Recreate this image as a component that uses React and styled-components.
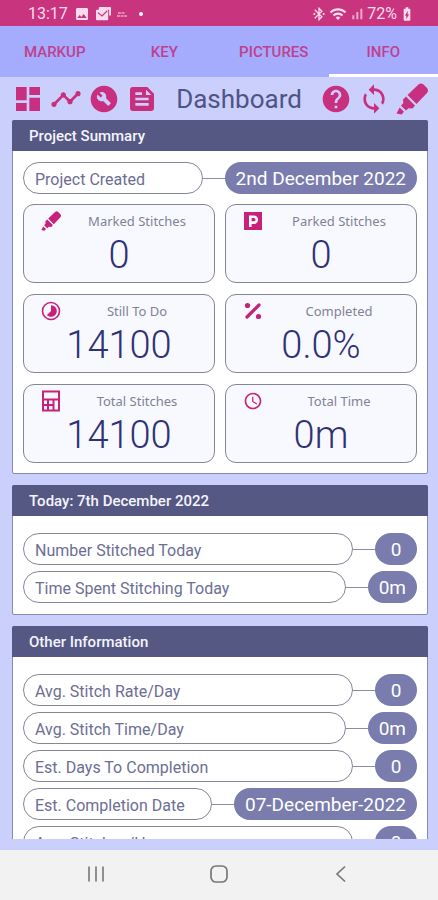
import React, { useState } from "react";
import styled, { createGlobalStyle } from "styled-components";
import {
  MdBatteryChargingFull,
  MdBluetoothConnected,
  MdBuildCircle,
  MdDashboard,
  MdFeed,
  MdHelp,
  MdImage,
  MdLoop,
  MdSchedule,
  MdSignalCellularAlt,
  MdTimeline,
  MdWifi,
} from "react-icons/md";

const GlobalStyle = createGlobalStyle`
  * {
    box-sizing: border-box;
  }
  body {
    margin: 0;
    font-family: Roboto, "Noto Sans", sans-serif;
    background: #cbcffb;
  }
  button {
    font-family: inherit;
    border: none;
    background: none;
    padding: 0;
    cursor: pointer;
  }
`;

const HighlighterIcon = () => (
  <svg viewBox="0 0 32 32" fill="currentColor" aria-hidden="true">
    <path d="M11.500 12 22.500 1.500Q25-.5 27.500 1.500L31 5Q33 7.500 31 10L20.500 21Z" />
    <path d="M10 13.500 19 22.500 16.500 25.500 12.500 25.200 10 27.500 5 22.800 7.300 20 7 16.500Z" />
    <path d="M3.600 24.600 8 28.800 5.500 31.500.5 30.500Z" />
  </svg>
);

const ProgressIcon = () => (
  <svg viewBox="0 0 20 20" fill="none" stroke="currentColor" aria-hidden="true">
    <circle cx="10" cy="10" r="8.500" strokeWidth="1.600" />
    <path d="M10 4.200A5.800 5.800 0 1 1 5.900 14.100L10 10Z" fill="currentColor" stroke="none" />
  </svg>
);

const ParkedIcon = () => (
  <svg viewBox="0 0 20 20" aria-hidden="true">
    <path fill="currentColor" d="M1 1h18v18H1Z" />
    <path fill="none" stroke="#fff" strokeWidth="2.600" d="M7.300 16V5.800h3.600a2.900 2.900 0 0 1 0 5.800H7.300" />
  </svg>
);

const PercentIcon = () => (
  <svg viewBox="0 0 20 20" fill="currentColor" aria-hidden="true">
    <circle cx="4.500" cy="4.500" r="2.600" />
    <circle cx="15.500" cy="15.500" r="2.600" />
    <path d="M4 16 16 4" stroke="currentColor" strokeWidth="3.200" strokeLinecap="round" />
  </svg>
);

const CalculatorIcon = () => (
  <svg viewBox="0 0 20 22" fill="none" stroke="currentColor" strokeWidth="2" aria-hidden="true">
    <rect x="2" y="1.500" width="16" height="19" />
    <path d="M2 9.500h16M2 15h10.500M7 9.500v11M12.500 9.500v11" />
  </svg>
);

const MailIcon = () => (
  <svg viewBox="0 0 16 14" aria-hidden="true">
    <path fill="currentColor" d="M4 0h11q1 0 1 1v8h-2V3H3V1q0-1 1-1ZM1 3h11q1 0 1 1v9q0 1-1 1H1q-1 0-1-1V4q0-1 1-1Z" />
    <path fill="none" stroke="#c9347f" strokeWidth="1.300" d="m2 6 4.500 3.500L12 4" />
  </svg>
);

const DotsIcon = () => (
  <svg viewBox="0 0 10 5" stroke="currentColor" aria-hidden="true">
    <path d="M1 1h7M0 4h10" strokeDasharray="3 .6" />
  </svg>
);

const RecentsIcon = () => (
  <svg viewBox="0 0 18 18" fill="none" stroke="currentColor" strokeWidth="1.600" aria-hidden="true">
    <path d="M2 1.500v15M9 1.500v15M16 1.500v15" />
  </svg>
);

const HomeIcon = () => (
  <svg viewBox="0 0 18 18" fill="none" stroke="currentColor" strokeWidth="1.700" aria-hidden="true">
    <rect x="1" y="1" width="16" height="16" rx="5" />
  </svg>
);

const BackIcon = () => (
  <svg viewBox="0 0 18 18" fill="none" stroke="currentColor" strokeWidth="1.700" aria-hidden="true">
    <path d="M13 1.500 5 9l8 7.500" />
  </svg>
);

const tabs = ["Markup", "Key", "Pictures", "Info"];

const tiles = [
  { label: "Marked Stitches", value: "0", icon: <HighlighterIcon /> },
  { label: "Parked Stitches", value: "0", icon: <ParkedIcon /> },
  { label: "Still To Do", value: "14100", icon: <ProgressIcon /> },
  { label: "Completed", value: "0.0%", icon: <PercentIcon /> },
  { label: "Total Stitches", value: "14100", icon: <CalculatorIcon /> },
  { label: "Total Time", value: "0m", icon: <MdSchedule /> },
];

const today = [
  { label: "Number Stitched Today", value: "0" },
  { label: "Time Spent Stitching Today", value: "0m" },
];

const other = [
  { label: "Avg. Stitch Rate/Day", value: "0" },
  { label: "Avg. Stitch Time/Day", value: "0m" },
  { label: "Est. Days To Completion", value: "0" },
  { label: "Est. Completion Date", value: "07-December-2022" },
  { label: "Avg. Stitches/Hour", value: "0" },
];

const StatRow = ({ label, value }) => (
  <Row>
    <RowLabel>{label}</RowLabel>
    <Connector />
    <RowValue>{value}</RowValue>
  </Row>
);

const App = () => {
  const [active, setActive] = useState("Info");

  return (
    <Screen>
      <GlobalStyle />
      <StatusBar>
        <StatusGroup>
          <Clock>13:17</Clock>
          <StatusIcon $size={16}>
            <MdImage />
          </StatusIcon>
          <StatusIcon $size={15}>
            <MailIcon />
          </StatusIcon>
          <StatusIcon $size={10}>
            <DotsIcon />
          </StatusIcon>
          <Dot />
        </StatusGroup>
        <StatusGroup $tight>
          <StatusIcon $size={16}>
            <MdBluetoothConnected />
          </StatusIcon>
          <StatusIcon $size={18}>
            <MdWifi />
          </StatusIcon>
          <StatusIcon $size={16} $dim>
            <MdSignalCellularAlt />
          </StatusIcon>
          <Battery>72%</Battery>
          <StatusIcon $size={16}>
            <MdBatteryChargingFull />
          </StatusIcon>
        </StatusGroup>
      </StatusBar>

      <Tabs>
        {tabs.map((tab) => (
          <Tab key={tab} type="button" $active={tab === active} onClick={() => setActive(tab)}>
            {tab}
          </Tab>
        ))}
      </Tabs>

      <Toolbar>
        <ToolGroup>
          <ToolButton type="button" aria-label="Dashboard">
            <MdDashboard />
          </ToolButton>
          <ToolButton type="button" aria-label="Timeline">
            <MdTimeline />
          </ToolButton>
          <ToolButton type="button" aria-label="Settings">
            <MdBuildCircle />
          </ToolButton>
          <ToolButton type="button" aria-label="Notes">
            <MdFeed />
          </ToolButton>
        </ToolGroup>
        <Title>Dashboard</Title>
        <ToolGroup>
          <ToolButton type="button" aria-label="Help">
            <MdHelp />
          </ToolButton>
          <ToolButton type="button" aria-label="Refresh">
            <MdLoop />
          </ToolButton>
          <ToolButton type="button" aria-label="Highlighter">
            <HighlighterIcon />
          </ToolButton>
        </ToolGroup>
      </Toolbar>

      <Content>
        <Panel>
          <PanelTitle>Project Summary</PanelTitle>
          <PanelBody $compact>
            <StatRow label="Project Created" value="2nd December 2022" />
            <TileGrid>
              {tiles.map((tile) => (
                <Tile key={tile.label}>
                  <TileIcon>{tile.icon}</TileIcon>
                  <TileLabel>{tile.label}</TileLabel>
                  <TileValue>{tile.value}</TileValue>
                </Tile>
              ))}
            </TileGrid>
          </PanelBody>
        </Panel>
        <Panel>
          <PanelTitle>Today: 7th December 2022</PanelTitle>
          <PanelBody>
            {today.map((row) => (
              <StatRow key={row.label} {...row} />
            ))}
          </PanelBody>
        </Panel>
        <Panel>
          <PanelTitle>Other Information</PanelTitle>
          <PanelBody>
            {other.map((row) => (
              <StatRow key={row.label} {...row} />
            ))}
          </PanelBody>
        </Panel>
      </Content>

      <NavBar>
        <NavButton type="button" aria-label="Recent apps">
          <RecentsIcon />
        </NavButton>
        <NavButton type="button" aria-label="Home">
          <HomeIcon />
        </NavButton>
        <NavButton type="button" aria-label="Back">
          <BackIcon />
        </NavButton>
      </NavBar>
    </Screen>
  );
};

const Screen = styled.div`
  display: flex;
  flex-direction: column;
  height: 100vh;
  overflow: hidden;
  background: #cbcffb;
`;

const StatusBar = styled.header`
  display: flex;
  flex: none;
  justify-content: space-between;
  align-items: center;
  height: 26px;
  padding: 2px 23px 0 28px;
  background: #c9347f;
  color: #fbdcec;
`;

const StatusGroup = styled.div`
  display: flex;
  align-items: center;
  gap: ${(props) => (props.$tight ? "2px" : "6px")};
`;

const Clock = styled.time`
  font-size: 16px;
  line-height: 20px;
`;

const Battery = styled.span`
  font-size: 16px;
  line-height: 20px;
`;

const StatusIcon = styled.span`
  display: flex;
  width: ${(props) => props.$size}px;
  opacity: ${(props) => (props.$dim ? 0.7 : 1)};
  svg {
    width: 100%;
    height: auto;
  }
`;

const Dot = styled.span`
  width: 4px;
  height: 4px;
  margin-left: 6px;
  border-radius: 50%;
  background: #fff;
`;

const Tabs = styled.nav`
  display: grid;
  flex: none;
  grid-template-columns: repeat(4, 1fr);
  height: 51px;
  background: #a5abfd;
`;

const Tab = styled.button`
  border-top: 3px solid transparent;
  border-bottom: 3px solid ${(props) => (props.$active ? "#fff" : "transparent")};
  color: #c0408f;
  font-size: 15px;
  font-weight: 500;
  text-transform: uppercase;
`;

const Toolbar = styled.div`
  display: flex;
  flex: none;
  justify-content: space-between;
  align-items: center;
  height: 43px;
  padding: 0 10px 0 12px;
`;

const ToolGroup = styled.div`
  display: flex;
  gap: 6px;
`;

const ToolButton = styled.button`
  display: flex;
  color: #c8307f;
  svg {
    width: 32px;
    height: 32px;
  }
`;

const Title = styled.h1`
  margin: 0;
  color: #4f5485;
  font-size: 26px;
  font-weight: 400;
  line-height: 36px;
`;

const Content = styled.main`
  flex: 1;
  min-height: 0;
  margin-bottom: 11px;
  padding: 0 10px 0 12px;
  overflow: hidden;
`;

const Panel = styled.section`
  margin-bottom: 11px;
  border: 1px solid #8589b5;
  border-radius: 2px;
  background: #fff;
`;

const PanelTitle = styled.h2`
  margin: -1px -1px 0;
  padding: 1px 17px 0;
  border-radius: 2px 2px 0 0;
  background: #545882;
  color: #f4f4ff;
  font-size: 15px;
  font-weight: 500;
  line-height: 30px;
`;

const PanelBody = styled.div`
  display: flex;
  flex-direction: column;
  gap: ${(props) => (props.$compact ? "10px" : "6px")};
  padding: ${(props) => (props.$compact ? "11px 10px 10px" : "17px 10px 11px")};
`;

const Row = styled.div`
  display: flex;
  align-items: center;
`;

const RowLabel = styled.span`
  flex: 1;
  height: 32px;
  padding: 1px 11px 0;
  border: 1px solid #85859a;
  border-radius: 16px;
  color: #6c6e93;
  font-size: 16px;
  line-height: 32px;
  white-space: nowrap;
`;

const Connector = styled.span`
  width: 22px;
  height: 1px;
  background: #8c8ca8;
`;

const RowValue = styled.span`
  min-width: 42px;
  height: 32px;
  padding: 1px 11px 0;
  border-radius: 16px;
  background: #797cad;
  color: #fff;
  font-size: 19px;
  line-height: 32px;
  text-align: center;
`;

const TileGrid = styled.div`
  display: grid;
  grid-template-columns: 1fr 1fr;
  gap: 11px 10px;
`;

const Tile = styled.div`
  display: grid;
  grid-template-columns: 20px 1fr;
  column-gap: 16px;
  padding: 4px 17px 5px;
  border: 1px solid #85859a;
  border-radius: 11px;
  background: #f8f9ff;
`;

const TileIcon = styled.span`
  display: flex;
  align-items: center;
  color: #c8207b;
  svg {
    width: 21px;
    height: 22px;
  }
`;

const TileLabel = styled.span`
  color: #808296;
  font-family: "Noto Sans", sans-serif;
  font-size: 13px;
  font-weight: 400;
  line-height: 24px;
  text-align: center;
`;

const TileValue = styled.strong`
  grid-column: 1 / -1;
  color: #2f3274;
  font-size: 38px;
  font-weight: 300;
  line-height: 44px;
  text-align: center;
`;

const NavBar = styled.footer`
  display: flex;
  flex: none;
  justify-content: space-between;
  align-items: center;
  height: 50px;
  padding: 0 88px 2px 87px;
  background: #f2f2f2;
`;

const NavButton = styled.button`
  display: flex;
  color: #77777a;
  svg {
    width: 18px;
    height: 18px;
  }
`;

export default App;
